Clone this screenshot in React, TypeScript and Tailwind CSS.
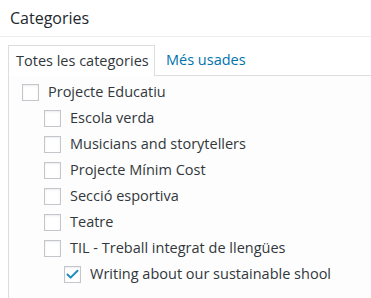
import { Check } from "lucide-react"

type Cat = { label: string; depth: number; checked?: boolean }

const CATS: Cat[] = [
  { label: "Projecte Educatiu", depth: 0 },
  { label: "Escola verda", depth: 1 },
  { label: "Musicians and storytellers", depth: 1 },
  { label: "Projecte Mínim Cost", depth: 1 },
  { label: "Secció esportiva", depth: 1 },
  { label: "Teatre", depth: 1 },
  { label: "TIL - Treball integrat de llengües", depth: 1 },
  { label: "Writing about our sustainable shool", depth: 2, checked: true },
]

const PAD = ["pl-[13px]", "pl-[35px]", "pl-[55px]"]

function Box({ checked }: { checked?: boolean }) {
  return (
    <span className="flex size-[17px] shrink-0 items-center justify-center border border-[#c3c6ca] bg-white shadow-[inset_0_1px_2px_rgba(0,0,0,0.08)]">
      {checked && <Check size={15} strokeWidth={3.2} className="text-[#1e8cbe]" />}
    </span>
  )
}

export default function App() {
  return (
    <div className="h-[298px] w-[371px] overflow-hidden bg-white font-['Open_Sans',sans-serif] text-[#32373c]">
      <div className="flex h-[37px] items-center border-b border-[#eeeeee] pl-[10px] pb-[1px]">
        <h2 className="text-[16px] text-[#23282d]">Categories</h2>
      </div>
      <div className="pl-[8px] pt-[8px]">
        <div className="flex h-[31px] items-stretch">
          <div className="flex w-[147px] items-center border border-b-0 border-[#dddddd] bg-white pl-[7px] text-[14.5px]">
            Totes les categories
          </div>
          <div className="flex flex-1 items-center border-b border-[#dddddd] pl-[11px] text-[14.5px] text-[#0073aa]">
            Més usades
          </div>
        </div>
        <div className="h-[240px] border-l border-[#dddddd] bg-[#fdfdfd] pt-[3px]">
          {CATS.map((c) => (
            <div key={c.label} className={`flex h-[26px] items-center gap-[9px] ${PAD[c.depth]}`}>
              <Box checked={c.checked} />
              <span className="text-[14.5px] leading-none">{c.label}</span>
            </div>
          ))}
        </div>
      </div>
    </div>
  )
}
